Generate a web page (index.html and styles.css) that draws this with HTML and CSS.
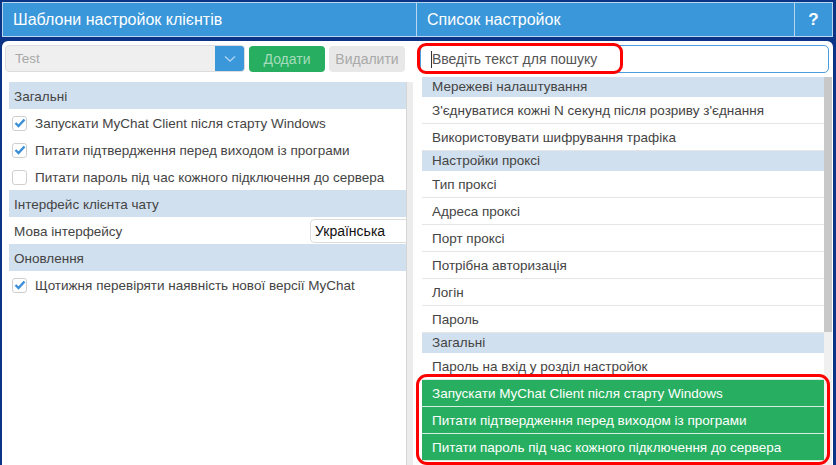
FILE: index.html
```html
<!DOCTYPE html>
<html lang="uk">
<head>
<meta charset="utf-8">
<link rel="stylesheet" href="styles.css">
</head>
<body>
<div class="app">
  <div class="header">
    <div class="hcell hleft">Шаблони настройок клієнтів</div>
    <div class="hcell hright">Список настройок</div>
    <div class="hcell hhelp">?</div>
  </div>
  <div class="body">
    <div class="left">
      <div class="toolbar">
        <div class="combo">
          <span class="combo-text">Test</span>
          <span class="combo-btn"><svg width="12" height="8" viewBox="0 0 12 8"><path d="M1 1.5 L6 6 L11 1.5" fill="none" stroke="#a9d0f0" stroke-width="1.5"/></svg></span>
        </div>
        <div class="btn btn-add">Додати</div>
        <div class="btn btn-del">Видалити</div>
      </div>
      <div class="lwrap">
        <div class="llist">
          <div class="lsec">Загальні</div>
          <div class="lrow"><span class="cb checked"><svg width="12" height="10" viewBox="0 0 12 10"><path d="M1.5 5 L4.5 8 L10.5 1.5" fill="none" stroke="#3a8fd8" stroke-width="2.4"/></svg></span>Запускати MyChat Client після старту Windows</div>
          <div class="lrow"><span class="cb checked"><svg width="12" height="10" viewBox="0 0 12 10"><path d="M1.5 5 L4.5 8 L10.5 1.5" fill="none" stroke="#3a8fd8" stroke-width="2.4"/></svg></span>Питати підтвердження перед виходом із програми</div>
          <div class="lrow"><span class="cb"></span>Питати пароль під час кожного підключення до сервера</div>
          <div class="lsec">Інтерфейс клієнта чату</div>
          <div class="lrow lang"><span class="lbl">Мова інтерфейсу</span><span class="sel">Українська</span></div>
          <div class="lsec">Оновлення</div>
          <div class="lrow"><span class="cb checked"><svg width="12" height="10" viewBox="0 0 12 10"><path d="M1.5 5 L4.5 8 L10.5 1.5" fill="none" stroke="#3a8fd8" stroke-width="2.4"/></svg></span>Щотижня перевіряти наявність нової версії MyChat</div>
        </div>
        <div class="lscroll"></div>
      </div>
    </div>
    <div class="right">
      <div class="search"><span class="caret"></span><span class="ph">Введіть текст для пошуку</span></div>
      <div class="rwrap">
        <div class="rlist">
          <div class="rsec">Мережеві налаштування</div>
          <div class="rrow">З'єднуватися кожні N секунд після розриву з'єднання</div>
          <div class="rrow">Використовувати шифрування трафіка</div>
          <div class="rsec">Настройки проксі</div>
          <div class="rrow">Тип проксі</div>
          <div class="rrow">Адреса проксі</div>
          <div class="rrow">Порт проксі</div>
          <div class="rrow">Потрібна авторизація</div>
          <div class="rrow">Логін</div>
          <div class="rrow">Пароль</div>
          <div class="rsec">Загальні</div>
          <div class="rrow">Пароль на вхід у розділ настройок</div>
          <div class="rrow green">Запускати MyChat Client після старту Windows</div>
          <div class="rrow green">Питати підтвердження перед виходом із програми</div>
          <div class="rrow green">Питати пароль під час кожного підключення до сервера</div>
        </div>
        <div class="rscroll"><div class="thumb"></div></div>
      </div>
      <div class="mark mark-search"></div>
      <div class="mark mark-green"></div>
    </div>
  </div>
</div>
</body>
</html>
```

FILE: styles.css
```css
* { box-sizing: border-box; }
html, body { margin: 0; padding: 0; }
body {
  width: 836px;
  height: 465px;
  overflow: hidden;
  background: #0c3486;
  font-family: "Liberation Sans", Arial, sans-serif;
  font-size: 13.5px;
  color: #444;
}
.app {
  padding: 2px 3px 0 2px;
  height: 465px;
  display: flex;
  flex-direction: column;
}
.header {
  height: 35px;
  display: flex;
  background: #3a97da;
  border: 1px solid #b9d6ef;
  color: #fff;
  font-size: 16px;
}
.hcell {
  display: flex;
  align-items: center;
}
.hleft { width: 414px; padding-left: 10px; border-right: 1px solid #b9d6ef; }
.hright { flex: 1; padding-left: 10px; border-right: 1px solid #b9d6ef; }
.hhelp { width: 37px; justify-content: center; font-weight: bold; font-size: 17px; }
.body {
  margin-top: 4px;
  flex: 1;
  display: flex;
  background: #fff;
  border-radius: 6px 6px 0 0;
  overflow: hidden;
}
.left {
  width: 411px;
  display: flex;
  flex-direction: column;
}
.toolbar {
  display: flex;
  gap: 4px;
  padding: 4px 0 0 3px;
  height: 41px;
}
.combo {
  width: 240px;
  height: 27px;
  display: flex;
  background: #efefef;
  border: 1px solid #dcdcdc;
  border-radius: 4px;
  overflow: hidden;
}
.combo-text {
  flex: 1;
  padding-left: 9px;
  line-height: 25px;
  color: #a8a8a8;
}
.combo-btn {
  width: 29px;
  background: #3a97da;
  display: flex;
  align-items: center;
  justify-content: center;
}
.btn {
  width: 76px;
  height: 26px;
  margin-top: 1px;
  border-radius: 4px;
  display: flex;
  align-items: center;
  justify-content: center;
  font-size: 14px;
}
.btn-add { background: #27ae60; color: #a6dcbc; }
.btn-del { background: #e8e8e8; color: #a9a9a9; }
.lwrap {
  flex: 1;
  display: flex;
}
.llist {
  flex: 1;
  padding-left: 7px;
}
.lscroll {
  width: 7px;
  background: #ececec;
  border-left: 1px solid #d6d6d6;
}
.lsec {
  height: 27px;
  line-height: 27px;
  padding-top: 1px;
  background: #d1e0ee;
  padding-left: 5px;
}
.lrow {
  height: 27px;
  display: flex;
  align-items: center;
  padding-left: 3px;
  padding-top: 1px;
}
.cb {
  width: 15px;
  height: 15px;
  border: 1px solid #cfcfcf;
  border-radius: 3px;
  margin-right: 8px;
  display: flex;
  align-items: center;
  justify-content: center;
  background: #fff;
}
.cb svg { margin-top: -1px; }
.lang { padding-left: 5px; }
.lbl { flex: 1; }
.sel {
  width: 96px;
  height: 24px;
  border: 1px solid #dcdcdc;
  border-right: 0;
  border-radius: 5px 0 0 5px;
  color: #111;
  padding-left: 4px;
  line-height: 22px;
  font-size: 14px;
}
.right {
  flex: 1;
  position: relative;
  display: flex;
  flex-direction: column;
  padding: 4px 1px 0 7px;
}
.search {
  width: 409px;
  height: 28px;
  border: 1px solid #4a9ee0;
  border-radius: 5px;
  display: flex;
  align-items: center;
  padding-left: 10px;
  color: #555;
  font-size: 14px;
}
.caret {
  width: 1px;
  height: 17px;
  background: #333;
}
.rwrap {
  margin-top: 4px;
  flex: 1;
  display: flex;
  margin-left: 2px;
}
.rlist { flex: 1; }
.rscroll {
  width: 8px;
  background: #f0f0f0;
}
.thumb {
  height: 255px;
  background: #c8c8c8;
}
.rsec {
  height: 20px;
  line-height: 20px;
  background: #d1e0ee;
  padding-left: 10px;
}
.rrow {
  height: 27px;
  line-height: 27px;
  padding-left: 10px;
  border-bottom: 1px solid #e6e6e6;
}
.rrow.green {
  background: #27ae60;
  color: #fff;
  border-bottom: 1px solid #d4efe0;
}
.mark {
  position: absolute;
  border: 3px solid #f00;
}
.mark-search {
  left: 4px;
  top: 2px;
  width: 206px;
  height: 31px;
  border-radius: 9px;
}
.mark-green {
  left: 3px;
  top: 333px;
  width: 414px;
  height: 91px;
  border-radius: 11px;
}
```
